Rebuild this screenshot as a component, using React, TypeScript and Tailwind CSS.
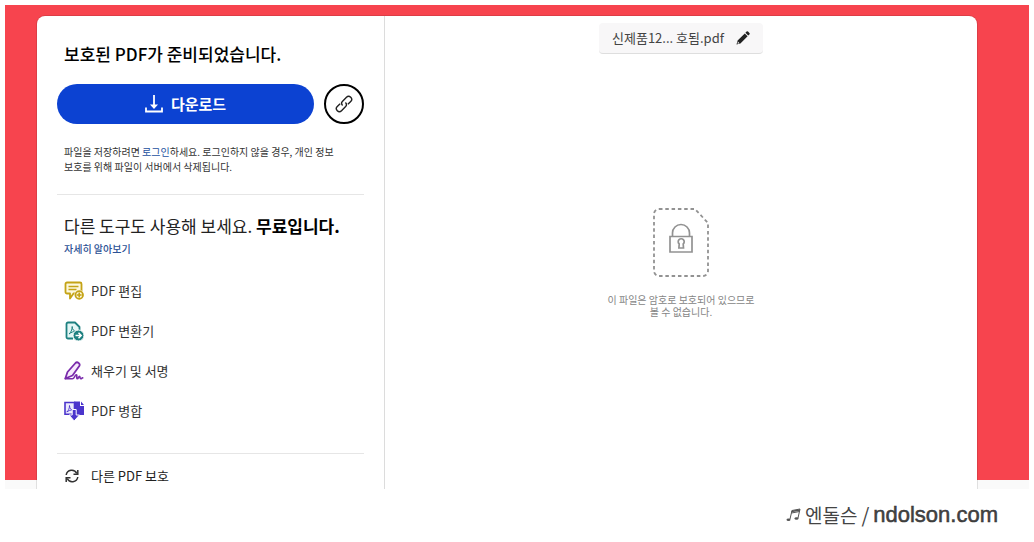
import type { ReactNode } from "react";

interface Tool {
  label: string;
  icon: ReactNode;
}

function CommentAddIcon() {
  return (
    <svg width="20" height="20" viewBox="0 0 20 20" fill="none" stroke="#c4a316" strokeWidth="1.8" aria-hidden="true">
      <path d="M3 1.5h13a1.5 1.5 0 0 1 1.5 1.5v8a1.5 1.5 0 0 1-1.5 1.5H9.5L6 17.5v-5H3A1.5 1.5 0 0 1 1.5 11V3A1.5 1.5 0 0 1 3 1.5Z" fill="#fdf8de" strokeLinejoin="round" />
      <path d="M4.5 5.5h10M4.5 8.500h8" strokeWidth="1.4" />
      <circle cx="15.2" cy="14" r="5" fill="#fff" stroke="none" />
      <circle cx="15.2" cy="14" r="3.8" fill="#fdf8de" />
      <path d="M15.2 11.500v5M12.700 14h5" strokeWidth="1.600" />
    </svg>
  );
}

function ConvertIcon() {
  return (
    <svg width="20" height="20" viewBox="0 0 20 20" fill="none" stroke="#1d8080" strokeWidth="1.8" aria-hidden="true">
      <path d="M9 17.5H4A1.5 1.5 0 0 1 2.5 16V3A1.5 1.5 0 0 1 4 1.5h7L15.5 6v5" fill="#e3f6f5" strokeLinejoin="round" />
      <path d="M5 13c1.8-1.5 3.200-4 3.200-7.500 0 3 1.500 4.500 4 5-2.800-.2-5 .8-7.200 2.500Z" strokeWidth="1" />
      <circle cx="14.500" cy="14.500" r="5.500" fill="#1d8080" stroke="#fff" strokeWidth="1" />
      <path d="M11.500 14.500h5.500M14.500 11.800l2.700 2.700-2.700 2.700" stroke="#fff" strokeWidth="1.500" />
    </svg>
  );
}

function SignIcon() {
  return (
    <svg width="20" height="20" viewBox="0 0 20 20" fill="none" stroke="#7a2bab" strokeWidth="1.8" strokeLinecap="round" strokeLinejoin="round" aria-hidden="true">
      <path d="M1.300 17.500 3.500 11 11.500 2c1.800-1.800 5.200.6 3.800 3L8.500 14.500Z" fill="#f6eafc" />
      <path d="M1.300 17.800h7c2.200 0 2.500-4 4-4 1.200 0-.2 4 1 4s1.300-2.500 2.200-2.500.2 2.500 1.200 2.500 1-.8 2-1" strokeWidth="1.600" />
    </svg>
  );
}

function MergeIcon() {
  return (
    <svg width="20" height="20" viewBox="0 0 20 20" fill="none" aria-hidden="true">
      <path d="M10 .5h6V5h4v9H10Z" fill="#4b35cc" />
      <path d="M17 .5 20 4h-3Z" fill="#4b35cc" />
      <path d="M1 1.500h9.500v11.700H1Z" fill="#eceafd" stroke="#4b35cc" strokeWidth="1.600" />
      <path d="M2.800 11c1.700-1.500 2.700-3.500 2.700-6.500 0 2.700 1.200 4 3.200 4.500-2.200-.2-4.200.8-5.900 2Z" stroke="#4b35cc" strokeWidth=".9" />
      <path d="M8.200 8.500h4V14h3.300L10.200 20 5 14h3.200Z" fill="#4b35cc" stroke="#fff" strokeWidth="1" />
    </svg>
  );
}

function DownloadIcon() {
  return (
    <svg width="18" height="18" viewBox="0 0 18 18" fill="none" stroke="#fff" strokeWidth="1.8" aria-hidden="true">
      <path d="M9 0v12" />
      <path d="M5 9.500h8L9 14Z" fill="#fff" stroke="none" />
      <path d="M1 12.5v4h16v-4" />
    </svg>
  );
}

function LinkIcon() {
  return (
    <svg width="18" height="18" viewBox="0 0 18 18" fill="none" stroke="#222" strokeWidth="1.4" aria-hidden="true">
      <g transform="rotate(-45 9 9)">
        <path d="M11 9A3 3 0 0 1 8 12H2.500A3 3 0 0 1 2.500 6H6.500" />
        <path d="M7 9A3 3 0 0 1 10 6H15.500A3 3 0 0 1 15.500 12H11.500" />
      </g>
    </svg>
  );
}

function RefreshIcon() {
  return (
    <svg width="14" height="14" viewBox="0 0 14 14" fill="none" stroke="#333" strokeWidth="1.5" aria-hidden="true">
      <path d="M1.2 6A5.6 5.6 0 0 1 11.8 4.5M12.8 8A5.6 5.6 0 0 1 2.2 9.5" />
      <path d="M12.8 1v4.3H8.5M1.2 13V8.7h4.3" />
    </svg>
  );
}

function PencilIcon() {
  return (
    <svg width="14" height="14" viewBox="0 0 14 14" fill="#222" aria-hidden="true">
      <path d="M10.600.6a1 1 0 0 1 1.400 0l1.400 1.400a1 1 0 0 1 0 1.400L12.200 4.600 9.400 1.800ZM8.800 2.400l2.800 2.800-7.200 7.200L.5 13.500l1.100-3.900Z" />
      <path d="m1.800 10.500 1.700 1.700-1.900.6Z" fill="#f8f7f8" />
    </svg>
  );
}

function LockedFileIcon() {
  return (
    <svg width="56" height="69" viewBox="0 0 56 69" fill="none" stroke="#929292" aria-hidden="true">
      <path d="M6 1H42L55 15V63a5 5 0 0 1-5 5H6a5 5 0 0 1-5-5V6a5 5 0 0 1 5-5Z" strokeWidth="1.8" strokeDasharray="3.5 2.8" />
      <path d="M17 28.500h22v15.500H17Z" strokeWidth="1.700" />
      <path d="M19.500 28v-3a8.500 8.500 0 0 1 17 0v3" strokeWidth="1.700" />
      <path d="M26.200 36a3 3 0 1 1 4 0l.3 4h-4.600Z" strokeWidth="1.700" />
    </svg>
  );
}

const tools: Tool[] = [
  { label: "PDF 편집", icon: <CommentAddIcon /> },
  { label: "PDF 변환기", icon: <ConvertIcon /> },
  { label: "채우기 및 서명", icon: <SignIcon /> },
  { label: "PDF 병합", icon: <MergeIcon /> },
];

function Sidebar() {
  return (
    <aside className="w-[348px] shrink-0 border-r border-[#dcdcdc] px-5 pt-6">
      <h1 className="px-[7px] text-[17px] leading-7 font-medium text-black">보호된 PDF가 준비되었습니다.</h1>
      <div className="mt-4 flex gap-[10px]">
        <button className="flex h-10 flex-1 items-center justify-center gap-2 rounded-full bg-[#0c42d2] text-[15px] font-bold text-white">
          <DownloadIcon />
          다운로드
        </button>
        <button aria-label="링크 복사" className="flex size-10 items-center justify-center rounded-full border-2 border-black">
          <LinkIcon />
        </button>
      </div>
      <p className="mt-5 pr-6 pl-[7px] text-[10px] leading-[15px] text-[#333]">
        파일을 저장하려면 <a href="#" className="text-[#1c4f9e]">로그인</a>하세요. 로그인하지 않을 경우, 개인 정보
        <br />
        보호를 위해 파일이 서버에서 삭제됩니다.
      </p>
      <hr className="mt-5 border-[#e6e6e6]" />
      <h2 className="mt-5 px-[7px] text-[17px] leading-[22px] font-normal text-[#222]">
        다른 도구도 사용해 보세요. <strong className="font-bold text-black">무료입니다.</strong>
      </h2>
      <a href="#" className="mt-1 block px-[7px] text-[10px] leading-[15px] font-medium text-[#2d5295]">자세히 알아보기</a>
      <ul className="mt-[15px] mb-[22px]">
        {tools.map((tool) => (
          <li key={tool.label}>
            <a href="#" className="flex h-10 items-center gap-[7px] px-[7px] text-[13px] text-[#333]">
              {tool.icon}
              {tool.label}
            </a>
          </li>
        ))}
      </ul>
      <hr className="border-[#e6e6e6]" />
      <button className="flex h-[35px] w-full items-center gap-3 px-2 pt-2 text-[13px] text-[#222]">
        <RefreshIcon />
        다른 PDF 보호
      </button>
    </aside>
  );
}

function Preview() {
  return (
    <section className="flex flex-1 flex-col items-center pt-[7px]">
      <div className="flex h-[31px] items-center gap-3 rounded-sm border-b border-[#dedede] bg-[#f8f7f8] px-[13px] text-[13px] text-[#444]">
        <span>신제품12... 호됨.pdf</span>
        <button aria-label="이름 바꾸기">
          <PencilIcon />
        </button>
      </div>
      <div className="mt-[154px] flex flex-col items-center">
        <LockedFileIcon />
        <p className="mt-[17px] text-center text-[10px] leading-3 text-[#858585]">
          이 파일은 암호로 보호되어 있으므로
          <br />볼 수 없습니다.
        </p>
      </div>
    </section>
  );
}

export default function App() {
  return (
    <div className="bg-white pt-[5px] font-['Noto_Sans_CJK_KR',sans-serif]">
      <main className="mx-[5px] bg-[linear-gradient(to_top,#fafafa_9px,#f7444e_9px)] pt-[11px] pr-[52px] pl-8">
        <div className="flex overflow-hidden rounded-t-lg bg-white shadow-[0_0_0_1px_#0000001a]">
          <Sidebar />
          <Preview />
        </div>
      </main>
      <footer className="flex items-center justify-end bg-white pt-2 pr-9 leading-9 text-[#444]">
        <svg width="15" height="16" viewBox="0 0 15 16" fill="none" stroke="#555" aria-hidden="true">
          <path d="m4 12 2-8.5 8-1.5-2 9" />
          <path d="m5.5 6 8-1.5" />
          <path d="M5.5 4.5 14 3" strokeWidth="1.6" />
          <ellipse cx="2.5" cy="12.8" rx="2" ry="1.3" fill="#555" stroke="none" />
          <ellipse cx="10.5" cy="11.5" rx="2" ry="1.3" fill="#555" stroke="none" />
        </svg>
        <span className="ml-1 text-[19px]">엔돌슨</span>
        <span className="mx-1 text-[20px]">/</span>
        <span className="font-['Liberation_Sans',sans-serif] text-[22px] [-webkit-text-stroke:0.5px_#333]">ndolson.com</span>
      </footer>
    </div>
  );
}
